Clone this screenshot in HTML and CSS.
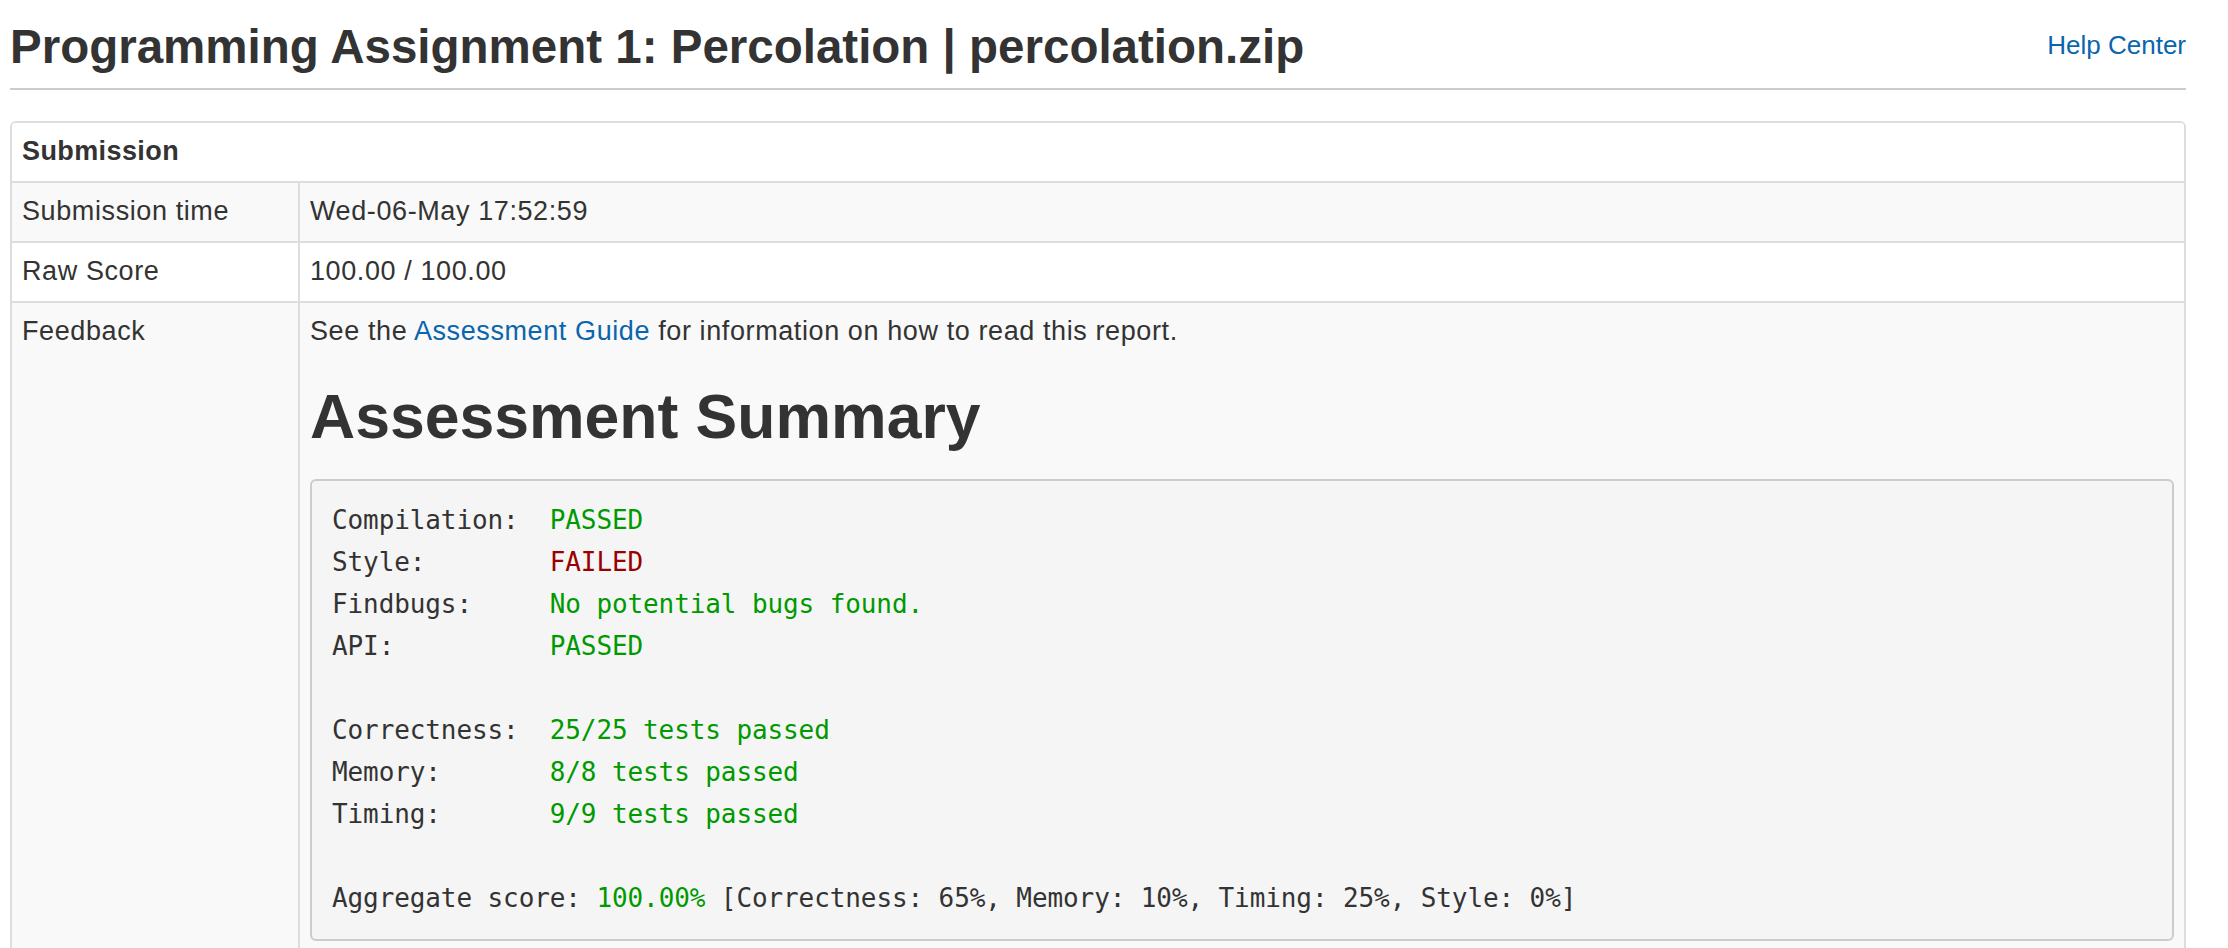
FILE: index.html
```html
<!DOCTYPE html>
<html lang="en">
<head>
<meta charset="utf-8">
<title>Programming Assignment 1: Percolation</title>
<link rel="stylesheet" href="styles.css">
</head>
<body>
<div class="page">
  <header class="page-header">
    <h1 class="title">Programming Assignment 1: Percolation | percolation.zip</h1>
    <a class="help" href="#">Help Center</a>
  </header>

  <div class="panel">
    <div class="panel-heading">Submission</div>
    <table class="details">
      <tr class="striped">
        <td class="label">Submission time</td>
        <td class="value">Wed-06-May 17:52:59</td>
      </tr>
      <tr>
        <td class="label">Raw Score</td>
        <td class="value">100.00 / 100.00</td>
      </tr>
      <tr class="striped">
        <td class="label">Feedback</td>
        <td class="value">
          <p class="intro">See the <a class="link" href="#">Assessment Guide</a> for information on how to read this report.</p>
          <h2 class="summary">Assessment Summary</h2>
<pre class="report">Compilation:  <span class="ok">PASSED</span>
Style:        <span class="fail">FAILED</span>
Findbugs:     <span class="ok">No potential bugs found.</span>
API:          <span class="ok">PASSED</span>

Correctness:  <span class="ok">25/25 tests passed</span>
Memory:       <span class="ok">8/8 tests passed</span>
Timing:       <span class="ok">9/9 tests passed</span>

Aggregate score: <span class="ok">100.00%</span> [Correctness: 65%, Memory: 10%, Timing: 25%, Style: 0%]</pre>
        </td>
      </tr>
    </table>
  </div>
</div>
</body>
</html>
```

FILE: styles.css
```css
html, body {
  margin: 0;
  padding: 0;
  background: #ffffff;
}

body {
  font-family: "Liberation Sans", Arial, Helvetica, sans-serif;
  color: #333333;
}

.page {
  width: 2176px;
  margin-left: 10px;
  padding-top: 21px;
}

.page-header {
  display: flex;
  justify-content: space-between;
  align-items: flex-start;
  padding-bottom: 14px;
  border-bottom: 2px solid #cccccc;
}

.title {
  margin: 0;
  font-size: 47.5px;
  line-height: 52.8px;
  font-weight: bold;
  color: #333333;
}

.help {
  margin-top: 5.5px;
  font-size: 26px;
  line-height: 37px;
  color: #0a65ad;
  text-decoration: none;
}

.panel {
  margin-top: 31px;
  border: 2px solid #dddddd;
  border-radius: 6px;
  overflow: hidden;
  background: #ffffff;
}

.panel-heading {
  padding: 10.5px 10px;
  font-size: 27px;
  line-height: 37px;
  font-weight: bold;
  letter-spacing: 0.4px;
  background: #ffffff;
}

.details {
  width: 100%;
  border-collapse: separate;
  border-spacing: 0;
  table-layout: fixed;
  font-size: 27px;
  line-height: 37px;
  letter-spacing: 0.6px;
}

.details td {
  border-top: 2px solid #dddddd;
  padding: 10.5px 10px;
  vertical-align: top;
}

.details .label {
  width: 266px;
}

.details .value {
  border-left: 2px solid #dddddd;
}

.striped {
  background: #f9f9f9;
}

.intro {
  margin: 0;
}

.link {
  color: #0a65ad;
  text-decoration: none;
}

.summary {
  margin: 32px 0 28px;
  font-size: 62.5px;
  line-height: 1.1;
  font-weight: bold;
  letter-spacing: 0;
  color: #333333;
}

.report {
  margin: 0 0 20px;
  padding: 18px 20px 20px;
  border: 2px solid #cccccc;
  border-radius: 6px;
  background: #f5f5f5;
  font-family: "DejaVu Sans Mono", Menlo, "Liberation Mono", monospace;
  font-size: 26px;
  line-height: 42px;
  letter-spacing: -0.1px;
  color: #333333;
  white-space: pre;
}

.ok {
  color: #009900;
}

.fail {
  color: #990000;
}
```
